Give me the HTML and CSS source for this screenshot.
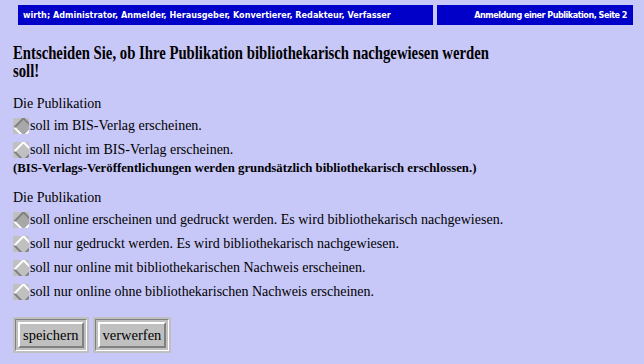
FILE: index.html
```html
<!DOCTYPE html>
<html lang="de">
<head>
    <meta charset="utf-8">
    <link rel="stylesheet" href="styles.css">
</head>
<body>
    <div class="topbar">
        <div class="bar bar-user">wirth; Administrator, Anmelder, Herausgeber, Konvertierer, Redakteur, Verfasser</div>
        <div class="bar bar-page">Anmeldung einer Publikation, Seite 2</div>
    </div>

    <div class="content">
        <h1>Entscheiden Sie, ob Ihre Publikation bibliothekarisch nachgewiesen werden soll!</h1>

        <div class="group">
            <div class="caption">Die Publikation</div>
            <label class="choice"><span class="radio checked"></span>soll im BIS-Verlag erscheinen.</label>
            <label class="choice"><span class="radio"></span>soll nicht im BIS-Verlag erscheinen.</label>
            <div class="note">(BIS-Verlags-Veröffentlichungen werden grundsätzlich bibliothekarisch erschlossen.)</div>
        </div>

        <div class="group">
            <div class="caption">Die Publikation</div>
            <label class="choice"><span class="radio checked"></span>soll online erscheinen und gedruckt werden. Es wird bibliothekarisch nachgewiesen.</label>
            <label class="choice"><span class="radio"></span>soll nur gedruckt werden. Es wird bibliothekarisch nachgewiesen.</label>
            <label class="choice"><span class="radio"></span>soll nur online mit bibliothekarischen Nachweis erscheinen.</label>
            <label class="choice"><span class="radio"></span>soll nur online ohne bibliothekarischen Nachweis erscheinen.</label>
        </div>

        <div class="buttons">
            <span class="btn-frame"><span class="btn-well"><button>speichern</button></span></span>
            <span class="btn-frame"><span class="btn-well"><button>verwerfen</button></span></span>
        </div>
    </div>
</body>
</html>
```

FILE: styles.css
```css
/* General */
* {
    margin: 0;
    padding: 0;
    box-sizing: border-box;
}

body {
    background: #c8c8f8;
    color: black;
    font-family: "Liberation Serif", "Times New Roman", serif;
    font-size: 14px;
}

/* Header bars */
.topbar {
    display: flex;
    gap: 4px;
    padding: 5px 11px 0 18px;
}

.bar {
    background: #0000c8;
    color: white;
    height: 20px;
    line-height: 20px;
    font-family: "Liberation Sans Narrow", "DejaVu Sans Condensed", sans-serif;
    font-weight: bold;
    font-size: 9px;
    white-space: nowrap;
}

.bar-user {
    flex: 1;
    padding-left: 5px;
}

.bar-page {
    width: 196px;
    text-align: right;
    padding-right: 6px;
    letter-spacing: -0.5px;
}

/* Main content */
.content {
    padding: 19px 13px 0 13px;
}

/* the original heading font is a narrow bitmap serif */
h1 {
    font-size: 19px;
    line-height: 18px;
    font-weight: bold;
    width: 640px;
    transform: scaleX(0.775);
    transform-origin: left top;
    margin-bottom: 15px;
}

.group {
    display: flex;
    flex-direction: column;
    margin-bottom: 14px;
}

.caption {
    line-height: 18px;
}

.choice {
    display: flex;
    align-items: center;
    height: 24px;
    padding-top: 1px;
}

.note {
    font-weight: bold;
    font-size: 12.75px;
    line-height: 14px;
}

/* Radio diamonds */
.radio {
    width: 16px;
    height: 16px;
    background: #c0c0c0;
    position: relative;
    overflow: hidden;
    margin-right: 1px;
    flex-shrink: 0;
}

.radio::before {
    content: "";
    position: absolute;
    left: 2.5px;
    top: 2.5px;
    width: 11px;
    height: 11px;
    transform: rotate(45deg);
    border: 2px solid;
    border-color: white #808080 #808080 white;
    background: #c0c0c0;
}

.radio.checked::before {
    border-color: #808080 white white #808080;
    background: #a8a8a8;
}

/* Buttons */
.buttons {
    display: flex;
    gap: 4px;
    margin-top: 5px;
}

.btn-frame {
    background: #c0c0c0;
    padding: 2px;
}

.btn-well {
    display: block;
    border: 1px solid;
    border-color: #808080 white white #808080;
    padding: 2px;
}

button {
    display: block;
    background: #c0c0c0;
    border: 2px solid;
    border-color: white #808080 #808080 white;
    font-family: "Liberation Serif", "Times New Roman", serif;
    font-size: 14.5px;
    line-height: 16px;
    padding: 3px 3px;
    color: black;
}
```
